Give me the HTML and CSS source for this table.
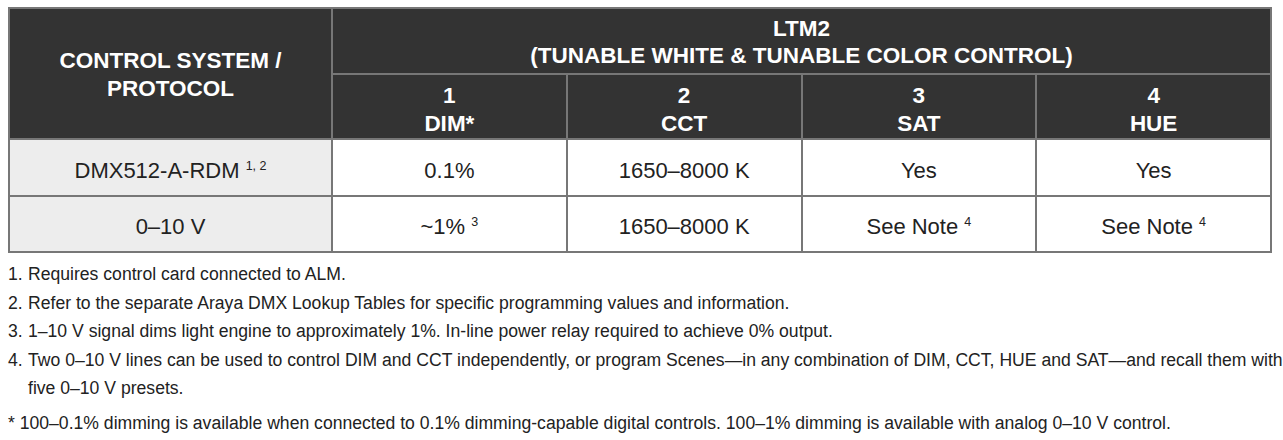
FILE: index.html
```html
<!DOCTYPE html>
<html lang="en">
<head>
<meta charset="utf-8">
<title>LTM2 Control</title>
<link rel="stylesheet" href="styles.css">
</head>
<body>
<div class="page">
  <table class="spec">
    <colgroup>
      <col class="c-first">
      <col class="c-val">
      <col class="c-val">
      <col class="c-val">
      <col class="c-val">
    </colgroup>
    <thead>
      <tr class="h1">
        <th rowspan="2" class="proto-head">CONTROL SYSTEM /<br>PROTOCOL</th>
        <th colspan="4">LTM2<br>(TUNABLE WHITE &amp; TUNABLE COLOR CONTROL)</th>
      </tr>
      <tr class="h2">
        <th>1<br>DIM*</th>
        <th>2<br>CCT</th>
        <th>3<br>SAT</th>
        <th>4<br>HUE</th>
      </tr>
    </thead>
    <tbody>
      <tr class="r1">
        <td class="proto">DMX512-A-RDM <sup>1, 2</sup></td>
        <td>0.1%</td>
        <td>1650–8000 K</td>
        <td>Yes</td>
        <td>Yes</td>
      </tr>
      <tr class="r2">
        <td class="proto">0–10 V</td>
        <td>~1% <sup>3</sup></td>
        <td>1650–8000 K</td>
        <td>See Note <sup>4</sup></td>
        <td>See Note <sup>4</sup></td>
      </tr>
    </tbody>
  </table>
  <ol class="notes">
    <li><span class="num">1.</span><span class="txt">Requires control card connected to ALM.</span></li>
    <li><span class="num">2.</span><span class="txt">Refer to the separate Araya DMX Lookup Tables for specific programming values and information.</span></li>
    <li><span class="num">3.</span><span class="txt">1–10 V signal dims light engine to approximately 1%. In-line power relay required to achieve 0% output.</span></li>
    <li><span class="num">4.</span><span class="txt nowrap">Two 0–10 V lines can be used to control DIM and CCT independently, or program Scenes—in any combination of DIM, CCT, HUE and SAT—and recall them with<br>five 0–10 V presets.</span></li>
  </ol>
  <p class="star">* 100–0.1% dimming is available when connected to 0.1% dimming-capable digital controls. 100–1% dimming is available with analog 0–10 V control.</p>
</div>
</body>
</html>
```

FILE: styles.css
```css
html, body {
  margin: 0;
  padding: 0;
  background: #ffffff;
  overflow: hidden;
}

.page {
  padding: 7px 0 0 8px;
  font-family: "Liberation Sans", Arial, sans-serif;
  color: #222222;
}

.spec {
  width: 1262px;
  border-collapse: collapse;
  table-layout: fixed;
}

.c-first { width: 323px; }
.c-val { width: 234.75px; }

.spec th,
.spec td {
  border: 2px solid #777777;
  text-align: center;
  padding: 0;
}

.spec th {
  background: #333333;
  color: #ffffff;
  font-weight: bold;
  font-size: 22.5px;
  line-height: 27.5px;
}

.spec .h1 th { height: 62px; padding-top: 2px; }
.spec .h2 th { height: 57px; padding-top: 6px; }
.spec .proto-head { padding-top: 20px; }

.spec td {
  font-size: 22px;
  line-height: 24px;
  color: #222222;
  background: #ffffff;
  padding-top: 6px;
}

.spec .r1 td { height: 49px; }
.spec .r2 td { height: 48px; }

.spec td.proto { background: #ededed; }

.spec sup {
  font-size: 12.5px;
  line-height: 0;
  vertical-align: 8px;
}

.notes {
  list-style: none;
  margin: 7px 0 0 0;
  padding: 0;
  font-size: 17.6px;
  line-height: 28.5px;
  color: #222222;
}

.notes li {
  display: flex;
}

.notes .num {
  flex: 0 0 auto;
  width: 20px;
}

.notes .txt {
  flex: 1 1 auto;
}

.notes .nowrap {
  white-space: nowrap;
}

.star {
  margin: 6px 0 0 0;
  font-size: 17.6px;
  line-height: 28px;
  color: #222222;
}
```
